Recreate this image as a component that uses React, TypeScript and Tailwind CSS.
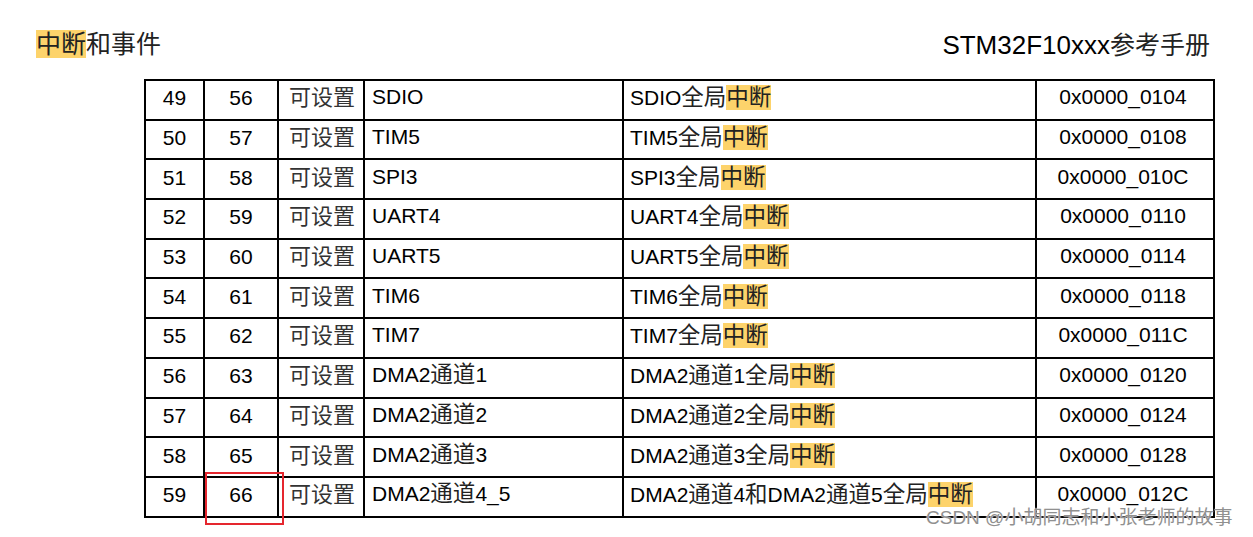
import { Fragment } from "react";

const rows = [
  { pos: "49", pri: "56", name: "SDIO", desc: "SDIO全局", addr: "0x0000_0104" },
  { pos: "50", pri: "57", name: "TIM5", desc: "TIM5全局", addr: "0x0000_0108" },
  { pos: "51", pri: "58", name: "SPI3", desc: "SPI3全局", addr: "0x0000_010C" },
  { pos: "52", pri: "59", name: "UART4", desc: "UART4全局", addr: "0x0000_0110" },
  { pos: "53", pri: "60", name: "UART5", desc: "UART5全局", addr: "0x0000_0114" },
  { pos: "54", pri: "61", name: "TIM6", desc: "TIM6全局", addr: "0x0000_0118" },
  { pos: "55", pri: "62", name: "TIM7", desc: "TIM7全局", addr: "0x0000_011C" },
  { pos: "56", pri: "63", name: "DMA2通道1", desc: "DMA2通道1全局", addr: "0x0000_0120" },
  { pos: "57", pri: "64", name: "DMA2通道2", desc: "DMA2通道2全局", addr: "0x0000_0124" },
  { pos: "58", pri: "65", name: "DMA2通道3", desc: "DMA2通道3全局", addr: "0x0000_0128" },
  { pos: "59", pri: "66", name: "DMA2通道4_5", desc: "DMA2通道4和DMA2通道5全局", addr: "0x0000_012C" },
];

const font = "font-['Liberation_Sans','Noto_Sans_CJK_SC',sans-serif]";

// chinese glyphs in the pdf sit a bit larger than the latin ones
function Mixed({ text }: { text: string }) {
  const parts = text.split(/([\u4e00-\u9fff]+)/).filter(Boolean);
  return (
    <>
      {parts.map((p, i) =>
        /[\u4e00-\u9fff]/.test(p) ? (
          <span key={i} className="text-[22.5px] text-[#222]">{p}</span>
        ) : (
          <Fragment key={i}>{p}</Fragment>
        )
      )}
    </>
  );
}

export default function App() {
  return (
    <div className={`relative w-[1253px] h-[537px] bg-white text-black overflow-hidden ${font}`}>
      {/* page header */}
      <div className="flex justify-between items-center pl-[36px] pr-[43px] pt-[29px] h-[79px] pb-[19px]">
        <div className="text-[25px] leading-[25px] text-[#222]">
          <span className="bg-[#fdd36b]">中断</span>和事件
        </div>
        <div className="leading-[28px] flex items-baseline">
          <span className="text-[26px]">STM32F10xxx</span>
          <span className="text-[25px] text-[#222]">参考手册</span>
        </div>
      </div>

      <table className="ml-[144px] w-[1069px] table-fixed border-collapse text-[21px] leading-[24px]">
        <colgroup>
          <col className="w-[59px]" />
          <col className="w-[74px]" />
          <col className="w-[86px]" />
          <col className="w-[259px]" />
          <col className="w-[413px]" />
          <col className="w-[178px]" />
        </colgroup>
        <tbody>
          {rows.map((r) => (
            <tr key={r.pos} className="h-[39.7px]">
              <td className="border-2 border-black text-center pb-[3px]">{r.pos}</td>
              <td className="border-2 border-black text-center pb-[3px]">{r.pri}</td>
              <td className="border-2 border-black pl-[10px] pb-[3px] text-[22px] text-[#333] whitespace-nowrap">可设置</td>
              <td className="border-2 border-black pl-[7px] pb-[5px] whitespace-nowrap">
                <Mixed text={r.name} />
              </td>
              <td className="border-2 border-black pl-[6px] pb-[3px] whitespace-nowrap">
                <Mixed text={r.desc} />
                <span className="bg-[#fdd36b] text-[22.5px] text-[#222]">中断</span>
              </td>
              <td className="border-2 border-black text-center pb-[5px] pr-[4px]">{r.addr}</td>
            </tr>
          ))}
        </tbody>
      </table>

      {/* red annotation box */}
      <div className="absolute left-[205px] top-[472px] w-[79px] h-[53px] border-2 border-[#e5262e]" />

      {/* watermark */}
      <div className="absolute left-[926px] top-[507px] text-[19px] leading-[22px] text-[#909090] whitespace-nowrap [text-shadow:0_0_2px_#fff,0_0_1px_#fff]">
        CSDN @小胡同志和小张老师的故事
      </div>
    </div>
  );
}
